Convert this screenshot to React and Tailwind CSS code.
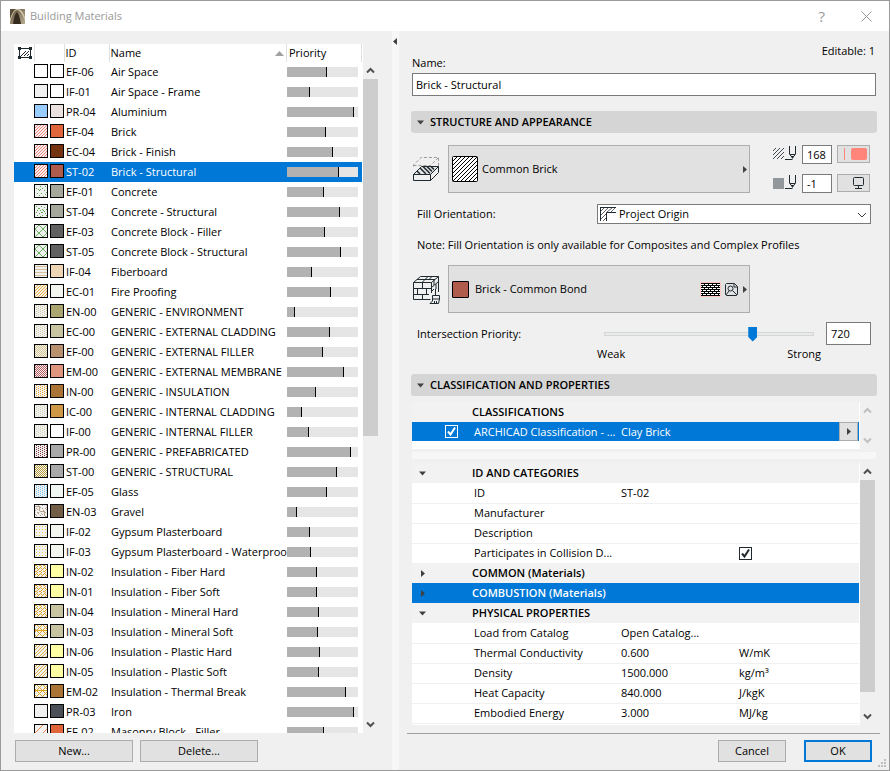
import clsx from "clsx";

// ===== Fill patterns, one test per pixel of the 12x12 swatch =====
const CONCRETE = ["5,1", "10,1", "1,3", "7,3", "3,4", "5,4", "9,5", "11,7", "2,8", "6,8", "10,9", "4,10", "8,11", "4,5"];
const DENSE = ["1,1", "6,1", "9,2", "3,3", "4,3", "7,4", "11,4", "2,5", "5,5", "9,6", "1,7", "6,7", "7,7", "4,8", "10,8", "2,10", "7,10", "11,10", "5,11", "8,5"];

const FILLS = {
  empty: () => false,
  diag: (x, y) => (x + y) % 3 === 2,
  diagWide: (x, y) => (x + y) % 7 === 1 || (x + y) % 7 === 4,
  dots: (x, y) => CONCRETE.includes(`${x},${y}`),
  dense: (x, y) => DENSE.includes(`${x},${y}`),
  cross: (x, y) => (x + y) % 8 === 3 || (x - y + 16) % 8 === 4,
  lines: (x, y) => y % 3 === 1,
  columns: (x, y) => (x % 4 === 1 && y % 2 === 0) || (x % 4 === 3 && y % 2 === 1),
  checker: (x, y) => (x + y) % 2 === 0,
  gravel: (x, y) => (x * 7 + y * 5 + ((x * y) % 5)) % 4 === 1,
  plus: (x, y) => x % 3 === 1 && y % 3 === 1,
  fiber: (x, y) => (y % 6 < 3 ? x % 4 === 1 + (y % 2) : x % 4 === 3 - (y % 2)) || (y % 3 === 0 && x % 4 === 0),
  mineral: (x, y) => y === 5 || (x + y) % 6 === 0 || (x - y + 12) % 6 === 2,
  single: (x, y) => (x + y) % 8 === 7,
};

// id, name, priority, fill, fill colour, fill background, surface colour
const MATERIALS = [
  ["EF-06", "Air Space", 550, "empty", "#fff", "#ffffff", "#ffffff"],
  ["IF-01", "Air Space - Frame", 310, "empty", "#fff", "#f0f0f0", "#ffffff"],
  ["PR-04", "Aluminium", 930, "empty", "#fff", "#99ccff", "#ebe1df"],
  ["EF-04", "Brick", 540, "diag", "#f08078", "#f5f0ee", "#e0653a"],
  ["EC-04", "Brick - Finish", 640, "diag", "#f08078", "#f5f0ee", "#743412"],
  ["ST-02", "Brick - Structural", 720, "diag", "#f08078", "#f5f0ee", "#b05c4c"],
  ["EF-01", "Concrete", 510, "dots", "#58a848", "#f0f0f0", "#a6a89c"],
  ["ST-04", "Concrete - Structural", 740, "dense", "#58a848", "#f0f0f0", "#a6a89c"],
  ["EF-03", "Concrete Block - Filler", 530, "cross", "#6ab060", "#f0f0f0", "#606060"],
  ["ST-05", "Concrete Block - Structural", 750, "cross", "#6ab060", "#f0f0f0", "#606060"],
  ["IF-04", "Fiberboard", 340, "lines", "#d6c098", "#f0f0f0", "#eed6b4"],
  ["EC-01", "Fire Proofing", 610, "diag", "#e8b040", "#f4f0e8", "#f3f6ee"],
  ["EN-00", "GENERIC - ENVIRONMENT", 100, "columns", "#cfc9a0", "#f0f0f0", "#aaa470"],
  ["EC-00", "GENERIC - EXTERNAL CLADDING", 600, "columns", "#cfc9a0", "#f0f0f0", "#c8c4a2"],
  ["EF-00", "GENERIC - EXTERNAL FILLER", 500, "checker", "#d6c890", "#f0f0f0", "#ba916e"],
  ["EM-00", "GENERIC - EXTERNAL MEMBRANE", 790, "checker", "#b85c60", "#f0f0f0", "#e0967e"],
  ["IN-00", "GENERIC - INSULATION", 400, "columns", "#e8a828", "#f0f0f0", "#aa7436"],
  ["IC-00", "GENERIC - INTERNAL CLADDING", 200, "columns", "#d2d2ae", "#f0f0f0", "#ce9846"],
  ["IF-00", "GENERIC - INTERNAL FILLER", 300, "columns", "#d2d2ae", "#f0f0f0", "#ffffff"],
  ["PR-00", "GENERIC - PREFABRICATED", 890, "columns", "#80383c", "#f0f0f0", "#a8a8a8"],
  ["ST-00", "GENERIC - STRUCTURAL", 700, "checker", "#b8a040", "#f0f0f0", "#a8a8a8"],
  ["EF-05", "Glass", 550, "columns", "#70c8f0", "#f0f0f0", "#f0f6f2"],
  ["EN-03", "Gravel", 130, "gravel", "#b8a48c", "#f0f0f0", "#725e46"],
  ["IF-02", "Gypsum Plasterboard", 310, "plus", "#f0d840", "#f0f0f0", "#f3f6ee"],
  ["IF-03", "Gypsum Plasterboard - Waterproof", 330, "plus", "#f0d840", "#f0f0f0", "#f3f6ee"],
  ["IN-02", "Insulation - Fiber Hard", 410, "fiber", "#e0a828", "#f0f0f0", "#ffffa4"],
  ["IN-01", "Insulation - Fiber Soft", 410, "fiber", "#e0a828", "#f0f0f0", "#ffffa4"],
  ["IN-04", "Insulation - Mineral Hard", 440, "fiber", "#e0a828", "#f0f0f0", "#c8c4a2"],
  ["IN-03", "Insulation - Mineral Soft", 430, "mineral", "#e0a828", "#f0f0f0", "#c8c4a2"],
  ["IN-06", "Insulation - Plastic Hard", 460, "diagWide", "#e0b040", "#f0f0f0", "#ffffa4"],
  ["IN-05", "Insulation - Plastic Soft", 440, "diagWide", "#e0b040", "#f0f0f0", "#ffffa4"],
  ["EM-02", "Insulation - Thermal Break", 820, "mineral", "#e0a828", "#f0f0f0", "#aa7436"],
  ["PR-03", "Iron", 930, "empty", "#fff", "#f0f0f0", "#4a4e56"],
  ["EF-02", "Masonry Block - Filler", 510, "single", "#f08848", "#f0f0f0", "#e0653a"],
];

const PROPERTIES = [
  { group: "ID AND CATEGORIES", open: true },
  { name: "ID", value: "ST-02" },
  { name: "Manufacturer" },
  { name: "Description" },
  { name: "Participates in Collision D...", check: true },
  { group: "COMMON (Materials)" },
  { group: "COMBUSTION (Materials)", selected: true },
  { group: "PHYSICAL PROPERTIES", open: true },
  { name: "Load from Catalog", value: "Open Catalog..." },
  { name: "Thermal Conductivity", value: "0.600", unit: "W/mK" },
  { name: "Density", value: "1500.000", unit: "kg/m³" },
  { name: "Heat Capacity", value: "840.000", unit: "J/kgK" },
  { name: "Embodied Energy", value: "3.000", unit: "MJ/kg" },
];

function Swatch({ fill = "empty", color, background }) {
  const pixels = [];
  for (let y = 0; y < 12; y++) {
    for (let x = 0; x < 12; x++) {
      if (FILLS[fill](x, y)) pixels.push(<rect key={`${x}-${y}`} x={x} y={y} width="1" height="1" />);
    }
  }
  return (
    <svg width="14" height="14" viewBox="-1 -1 14 14" aria-hidden="true">
      <rect x="-1" y="-1" width="14" height="14" fill="#000" />
      <rect width="12" height="12" fill={background} />
      <g fill={color}>{pixels}</g>
    </svg>
  );
}

function Triangle({ dir = "right", className }) {
  const paths = { right: "M3 1L7 4.5L3 8z", down: "M1 2.500H8L4.500 6.500z", left: "M5 1L1 4.500L5 8z" };
  return (
    <svg width="9" height="9" viewBox="0 0 9 9" fill="#404040" className={className} aria-hidden="true">
      <path d={paths[dir]} />
    </svg>
  );
}

function Chevron({ up, color = "#505050" }) {
  return (
    <svg width="9" height="7" viewBox="0 0 9 7" fill="none" stroke={color} strokeWidth="2" aria-hidden="true">
      <path d={up ? "M1 5.500L4.500 2L8 5.500" : "M1 1.500L4.500 5L8 1.500"} />
    </svg>
  );
}

function ScrollBar({ thumb, disabled, className }) {
  const color = disabled ? "#bfbfbf" : "#505050";
  return (
    <div className={clsx("flex w-4 shrink-0 flex-col bg-[#f0f0f0] pr-px", className)}>
      <button aria-label="Scroll up" className="flex h-[17px] items-center justify-center">
        <Chevron up color={color} />
      </button>
      <div className="min-h-0 flex-1">
        {thumb && <div className="bg-[#cdcdcd]" style={{ height: thumb }} />}
      </div>
      <button aria-label="Scroll down" className="flex h-[17px] items-center justify-center">
        <Chevron color={color} />
      </button>
    </div>
  );
}

function CheckBox({ label, light }) {
  return (
    <span className="inline-grid size-[13px] place-items-center align-middle">
      <input
        type="checkbox"
        defaultChecked
        aria-label={label}
        className={clsx(
          "peer col-start-1 row-start-1 size-[13px] appearance-none border",
          light ? "border-white" : "border-[#1f2a30] bg-white"
        )}
      />
      <svg
        viewBox="0 0 13 13"
        fill="none"
        stroke={light ? "#fff" : "#1f2a30"}
        strokeWidth="2"
        className="pointer-events-none invisible col-start-1 row-start-1 size-[13px] peer-checked:visible"
      >
        <path d="M3 6.500L5.500 9.500L10 2.500" />
      </svg>
    </span>
  );
}

function SectionHeader({ children }) {
  return (
    <button className="flex h-[22px] w-full items-center gap-[5px] rounded-[3px] bg-[#d5d5d5] pl-[5px] text-left font-semibold">
      <Triangle dir="down" />
      {children}
    </button>
  );
}

function PenIcon({ solid }) {
  return (
    <svg width="24" height="15" viewBox="0 0 24 15" fill="none" stroke="#1f2a30" aria-hidden="true">
      {solid ? (
        <rect x="0" y="4" width="11" height="11" fill="#92979b" stroke="none" />
      ) : (
        <path d="M0 6L3 3M0 10L7 3M0 14L11 3M4 14L11 7M8 14L11 11" stroke="#404a50" />
      )}
      <path d="M16.500 1V9L19.500 13L22.500 9V1M17 9.500H22M12 14.500H19.500" />
      <path d="M18 11H21L19.500 14z" fill="#1f2a30" stroke="none" />
    </svg>
  );
}

function CutFillIcon() {
  return (
    <svg width="28" height="26" viewBox="0 0 28 26" fill="none" stroke="#1f2a30" aria-hidden="true">
      <path d="M1.500 10.500V9L9 1.500H26.500V10L18.500 17.500M1.500 9.500H18.500L26.500 1.500M18.500 9.500V17" stroke="#9a9a9a" strokeDasharray="3 2" />
      <path d="M1.500 18.500L9.500 10.500H26.500L18.500 18.500z" fill="#e4e4e4" />
      <path d="M5 15L8 18M8 12L14 18M11 10.500L18 17.500M15 10.500L20 15.500M19 10.500L22 13.500" strokeWidth="1.500" />
      <path d="M1.500 18.500H18.500V24.500H1.500zM18.500 24.500L26.500 16.500V10.500" />
    </svg>
  );
}

function SurfaceIcon() {
  return (
    <svg width="28" height="29" viewBox="0 0 28 29" fill="none" stroke="#1f2a30" aria-hidden="true">
      <path d="M18.500 24.500H1.500V7.500L8.500 1.500H26.500V17M1.500 7.500H19.500L26.500 1.500M19.500 7.500V18" />
      <path d="M1.500 13.500H19M1.500 19.500H17M10.500 7.500V13.500M5.500 13.500V19.500M14.500 13.500V19.500M10.500 19.500V24.500M5 4.500H23M13 4.500L16 1.500M10 7.500L13 4.500M17 4.500L20 1.500" />
      <path d="M20 12L26 7M22 5V10M24 9V14M20 16L22 14" />
      <path d="M23.500 14V20.500M20.500 20.500H27.500V24H20.500zM20.500 24V26L18 28.500H26.500L27.500 24" fill="#f0f0f0" />
      <path d="M22.500 26V28M24.500 26V28" />
    </svg>
  );
}

function MaterialList() {
  return (
    <div className="flex min-h-0 flex-1 overflow-hidden">
      <div className="min-w-0 flex-1 overflow-hidden bg-white pr-px">
        <table className="w-full table-fixed border-collapse text-left">
          <colgroup>
            <col className="w-5" />
            <col className="w-[30px]" />
            <col className="w-[45px]" />
            <col />
            <col className="w-[75px]" />
          </colgroup>
          <thead>
            <tr className="h-[18px] [&>th]:border-r [&>th]:border-[#e0e0e0] [&>th]:p-0 [&>th]:font-normal">
              <th>
                <svg width="14" height="12" viewBox="0 0 14 12" fill="none" stroke="#1f2a30" className="ml-1" aria-label="Fill">
                  <path d="M1.500 1.500H12.500V10.500H1.500z" />
                  <path d="M3 9L8 4M6 9L11 4M9 9L11 7" />
                  <path d="M0 0h3v3h-3zM11 0h3v3h-3zM0 9h3v3h-3zM11 9h3v3h-3z" fill="#1f2a30" stroke="none" />
                </svg>
              </th>
              <th></th>
              <th><span className="pl-px">ID</span></th>
              <th>
                <div className="flex items-center justify-between pr-0.5 pl-px">
                  Name
                  <svg width="9" height="5" viewBox="0 0 9 5" fill="#a0a0a0" aria-hidden="true">
                    <path d="M0 5L4.500 0L9 5z" />
                  </svg>
                </div>
              </th>
              <th><span className="pl-0.5">Priority</span></th>
            </tr>
          </thead>
          <tbody>
            {MATERIALS.map(([id, name, priority, fill, color, background, surface]) => (
              <tr
                key={id}
                className={clsx("h-5 [&>td]:p-0", id === "ST-02" && "bg-[#0078d7] text-white")}
              >
                <td></td>
                <td>
                  <div className="-mt-0.5 flex gap-0.5">
                    <Swatch fill={fill} color={color} background={background} />
                    <Swatch background={surface} />
                  </div>
                </td>
                <td><div className="pl-0.5 whitespace-nowrap">{id}</div></td>
                <td><div className="overflow-hidden pl-0.5 whitespace-nowrap">{name}</div></td>
                <td>
                  <div className="mr-1 h-[10px] bg-[#e5e5e5]">
                    <div className="box-content h-full border-r border-black bg-[#b2b2b2]" style={{ width: `${priority / 10}%` }} />
                  </div>
                </td>
              </tr>
            ))}
          </tbody>
        </table>
      </div>
      <ScrollBar thumb="56%" className="mt-[18px]" />
    </div>
  );
}

function ClassificationTable() {
  return (
    <div className="flex h-[47px]">
      <div className="flex-1 bg-white pr-px">
        <table className="w-full table-fixed border-collapse text-left">
          <colgroup>
            <col className="w-[60px]" />
            <col className="w-[149px]" />
            <col />
          </colgroup>
          <thead>
            <tr className="h-5 bg-[#f2f2f2]">
              <th className="p-0"></th>
              <th colSpan={2} className="p-0 font-semibold">CLASSIFICATIONS</th>
            </tr>
          </thead>
          <tbody>
            <tr className="h-[19px] bg-[#0078d7] text-white">
              <td className="p-0 pl-[33px] leading-none"><CheckBox label="ARCHICAD Classification" light /></td>
              <td className="p-0 pl-0.5 whitespace-nowrap">ARCHICAD Classification - ...</td>
              <td className="p-0">
                <div className="flex h-[19px] items-center justify-between">
                  Clay Brick
                  <button aria-label="Choose classification" className="mr-px flex h-[19px] w-[19px] items-center justify-center border border-[#adadad] bg-[#e1e1e1]">
                    <Triangle />
                  </button>
                </div>
              </td>
            </tr>
          </tbody>
        </table>
      </div>
      <ScrollBar disabled />
    </div>
  );
}

function PropertyTable() {
  return (
    <div className="flex min-h-0 flex-1">
      <div className="min-w-0 flex-1 overflow-hidden bg-white pr-px">
        <table className="w-full table-fixed border-collapse">
          <colgroup>
            <col className="w-[60px]" />
            <col className="w-[149px]" />
            <col className="w-[118px]" />
            <col />
          </colgroup>
          <tbody>
            {PROPERTIES.map((row) =>
              row.group ? (
                <tr
                  key={row.group}
                  className={clsx("h-5 [&>td]:p-0", row.selected ? "bg-[#0078d7] text-white" : "bg-[#f2f2f2]")}
                >
                  <td><Triangle dir={row.open ? "down" : "right"} className="ml-1.5" /></td>
                  <td colSpan={3} className="font-semibold">{row.group}</td>
                </tr>
              ) : (
                <tr key={row.name} className="h-5 border-b border-[#f0f0f0] [&>td]:p-0">
                  <td></td>
                  <td><div className="pl-0.5 whitespace-nowrap">{row.name}</div></td>
                  <td>{row.value}</td>
                  <td className={clsx(row.check && "leading-none")}>
                    {row.check ? <CheckBox label={row.name} /> : row.unit}
                  </td>
                </tr>
              )
            )}
          </tbody>
        </table>
      </div>
      <ScrollBar thumb="93%" />
    </div>
  );
}

function Structure() {
  const field = "border border-[#7a7a7a] bg-white px-1";
  const picker = "flex h-12 w-[302px] items-center border border-[#adadad] bg-[#e1e1e1] pl-[3px] text-left";
  return (
    <div className="pt-3 pr-1.5">
      <div className="flex">
        <div className="flex w-[37px] shrink-0 items-center pl-px"><CutFillIcon /></div>
        <button className={picker}>
          <svg width="26" height="26" viewBox="0 0 26 26" className="mr-1" aria-hidden="true">
            <rect x="0.500" y="0.500" width="25" height="25" rx="1" fill="#fff" stroke="#000" />
            <path d="M1 5L5 1M1 9L9 1M1 13L13 1M1 17L17 1M1 21L21 1M1 25L25 1M5 25L25 5M9 25L25 9M13 25L25 13M17 25L25 17M21 25L25 21" stroke="#000" />
          </svg>
          <span className="flex-1">Common Brick</span>
          <Triangle />
        </button>
        <div className="ml-auto grid grid-cols-[24px_30px_33px] content-between gap-x-[5px] pr-px">
          <PenIcon />
          <input aria-label="Cut fill pen" defaultValue="168" className={clsx(field, "h-[19px] min-w-0")} />
          <button aria-label="Cut fill pen colour" className="flex h-[18px] items-center justify-end gap-1.5 border border-[#adadad] bg-[#e1e1e1] px-0.5">
            <span className="h-3 w-px bg-[#ff847a]" />
            <span className="h-3 w-4 rounded-xs bg-[#ff847a]" />
          </button>
          <PenIcon solid />
          <input aria-label="Background pen" defaultValue="-1" className={clsx(field, "h-[19px] min-w-0")} />
          <button aria-label="Background pen colour" className="flex h-[18px] items-center justify-end border border-[#adadad] bg-[#e1e1e1] px-1">
            <svg width="13" height="12" viewBox="0 0 13 12" fill="none" stroke="#1f2a30" aria-hidden="true">
              <rect x="1.500" y="0.500" width="10" height="8" rx="1" />
              <path d="M6.500 9V11M3 11.500H10" />
            </svg>
          </button>
        </div>
      </div>

      <div className="mt-[11px] flex items-center">
        <label htmlFor="orientation" className="ml-1.5 w-[180px]">Fill Orientation:</label>
        <div className="relative h-5 flex-1">
          <select id="orientation" className="h-full w-full appearance-none border border-[#7a7a7a] bg-white pl-[21px]">
            <option>Project Origin</option>
          </select>
          <svg width="16" height="14" viewBox="0 0 16 14" fill="none" stroke="#1f2a30" className="pointer-events-none absolute top-[3px] left-[3px]" aria-hidden="true">
            <path d="M0 0.500H16M0.500 0V14M6.500 14V5.500H16" />
            <path d="M1 4L4 1M1 8L8 1M1 12L6 7M7 5L12 1M11 5L15 1M3 14L6 11" stroke="#606060" />
          </svg>
          <svg width="10" height="6" viewBox="0 0 10 6" fill="none" stroke="#404040" className="pointer-events-none absolute top-2 right-1" aria-hidden="true">
            <path d="M1 1L5 5L9 1" />
          </svg>
        </div>
      </div>

      <p className="mt-3 ml-1.5 leading-[18px]">
        Note: Fill Orientation is only available for Composites and Complex Profiles
      </p>

      <div className="mt-[11px] flex">
        <div className="flex w-[37px] shrink-0 items-center pl-px"><SurfaceIcon /></div>
        <button className={picker}>
          <span className="size-[17px] rounded-[1px] border border-black bg-[#b05c4c]" />
          <span className="ml-1.5 flex-1">Brick - Common Bond</span>
          <svg width="21" height="15" viewBox="0 0 21 15" shapeRendering="crispEdges" aria-hidden="true">
            <rect width="21" height="15" fill="#ffc8c4" />
            <rect x="1" y="1" width="19" height="13" fill="#000" />
            <path d="M1 2.500H20M1 6.500H20M1 10.500H20" stroke="#fff" strokeDasharray="3 1" />
            <path d="M1 4.500H20M1 8.500H20M1 12.500H20" stroke="#fff" strokeDasharray="3 1" strokeDashoffset="2" />
          </svg>
          <svg width="13" height="13" viewBox="0 0 13 13" fill="none" stroke="#1f2a30" className="mr-0.5 ml-1" aria-hidden="true">
            <path d="M9.500 0.500H1.500L0.500 1.500V11.500L1.500 12.500H11.500L12.500 11.500V3.500z" />
            <circle cx="5.500" cy="5.500" r="2.500" />
            <path d="M1 12L4 8M7.500 7.500L12 12M9 1V4H12" />
          </svg>
          <Triangle />
        </button>
      </div>

      <div className="mt-[9px] flex items-center">
        <label htmlFor="priority" className="ml-1.5 w-[187px]">Intersection Priority:</label>
        <input
          id="priority"
          type="range"
          min="0"
          max="1000"
          defaultValue="720"
          className="h-[15px] min-w-0 flex-1 appearance-none bg-transparent [&::-webkit-slider-runnable-track]:h-1 [&::-webkit-slider-runnable-track]:border [&::-webkit-slider-runnable-track]:border-[#d6d6d6] [&::-webkit-slider-runnable-track]:bg-[#e7eaea] [&::-webkit-slider-thumb]:-mt-1.5 [&::-webkit-slider-thumb]:h-[15px] [&::-webkit-slider-thumb]:w-[9px] [&::-webkit-slider-thumb]:appearance-none [&::-webkit-slider-thumb]:bg-[#0078d7] [&::-webkit-slider-thumb]:[clip-path:polygon(0_0,100%_0,100%_70%,50%_100%,0_70%)]"
        />
        <input aria-label="Priority value" defaultValue="720" className={clsx(field, "ml-3 h-[23px] w-[45px]")} />
      </div>
      <div className="ml-[186px] flex justify-between pr-[50px] leading-[18px]">
        <span>Weak</span>
        <span>Strong</span>
      </div>
    </div>
  );
}

export default function App() {
  return (
    <div className="flex h-screen min-h-[640px] flex-col border border-[#9a9a9a] bg-[#f0f0f0] font-['Open_Sans','Noto_Sans',sans-serif] text-[11px] leading-4 text-black">
      {/* Title bar */}
      <header className="flex h-[30px] shrink-0 items-center bg-white pr-[17px] pl-[9px] text-[#999]">
        <svg width="15" height="15" viewBox="0 0 15 15" aria-hidden="true">
          <defs>
            <linearGradient id="arch" x1="0" y1="0" x2="1" y2="1">
              <stop offset="0" stopColor="#4a3c28" />
              <stop offset="0.5" stopColor="#8e8068" />
              <stop offset="1" stopColor="#b8ac90" />
            </linearGradient>
          </defs>
          <rect width="15" height="15" fill="url(#arch)" />
          <path d="M0 0H6C3 3 1 7 0 11z" fill="#5a4c36" />
          <path d="M0 14C2 6 4 2 7 1C10 1 13 6 15 12V8C13 3 11 0 8 0H6C3 2 1 7 0 10z" fill="#cfc4a8" />
          <path d="M3 15C4 8 5 5 7 3C9 5 10 10 11 15z" fill="#342a1e" />
        </svg>
        <h1 className="ml-[5px] flex-1">Building Materials</h1>
        <button aria-label="Help" className="mr-9 text-[15px]">?</button>
        <button aria-label="Close">
          <svg width="11" height="11" viewBox="0 0 11 11" stroke="#999" fill="none"><path d="M0.500 0.500L10.500 10.500M10.500 0.500L0.500 10.500" /></svg>
        </button>
      </header>

      <div className="flex min-h-0 flex-1">
        {/* Material list */}
        <section className="flex w-[391px] shrink-0 flex-col pt-[13px] pr-[13px] pb-2 pl-[13px]">
          <MaterialList />
          <div className="mt-[7px] flex gap-[7px] pl-px">
            <button className="h-[22px] w-[118px] border border-[#adadad] bg-[#e1e1e1]">New...</button>
            <button className="h-[22px] w-[118px] border border-[#adadad] bg-[#e1e1e1]">Delete...</button>
          </div>
        </section>

        <div className="w-[7px] shrink-0 bg-[#f7f7f7] pt-1.5">
          <Triangle dir="left" />
        </div>

        {/* Settings of the selected material */}
        <section className="flex min-w-0 flex-1 flex-col pb-2">
          <div className="flex min-h-0 flex-1 flex-col px-3 pt-3">
            <p className="pr-0.5 text-right leading-4">Editable: 1</p>
            <label htmlFor="name" className="-mt-1 px-px leading-4">Name:</label>
            <div className="px-px pt-0.5">
              <input id="name" defaultValue="Brick - Structural" className="h-[23px] w-full border border-[#7a7a7a] bg-white px-[3px]" />
            </div>
            <div className="mt-[15px]"><SectionHeader>STRUCTURE AND APPEARANCE</SectionHeader></div>
            <Structure />
            <div className="mt-[11px]"><SectionHeader>CLASSIFICATION AND PROPERTIES</SectionHeader></div>
            <div className="flex min-h-0 flex-1 flex-col pt-1.5 pr-px pl-px">
              <ClassificationTable />
              <div className="mt-[3px] mb-1 h-[7px] shrink-0 bg-[#f7f7f7]" />
              <PropertyTable />
            </div>
          </div>
          <div className="mt-2 mr-[9px] ml-2 border-t border-[#a0a0a0]" />
          <div className="mt-1.5 flex justify-end gap-[18px] pr-[17px]">
            <button className="h-[22px] w-[68px] border border-[#adadad] bg-[#e1e1e1]">Cancel</button>
            <button className="h-[22px] w-[68px] border-2 border-[#0078d7] bg-[#e1e1e1]">OK</button>
          </div>
        </section>
      </div>
      <svg width="8" height="8" viewBox="0 0 8 8" fill="#bfbfbf" className="pointer-events-none fixed right-1 bottom-1" aria-hidden="true">
        <path d="M6 0h2v2h-2zM3 3h2v2h-2zM6 3h2v2h-2zM0 6h2v2h-2zM3 6h2v2h-2zM6 6h2v2h-2z" />
      </svg>
    </div>
  );
}
